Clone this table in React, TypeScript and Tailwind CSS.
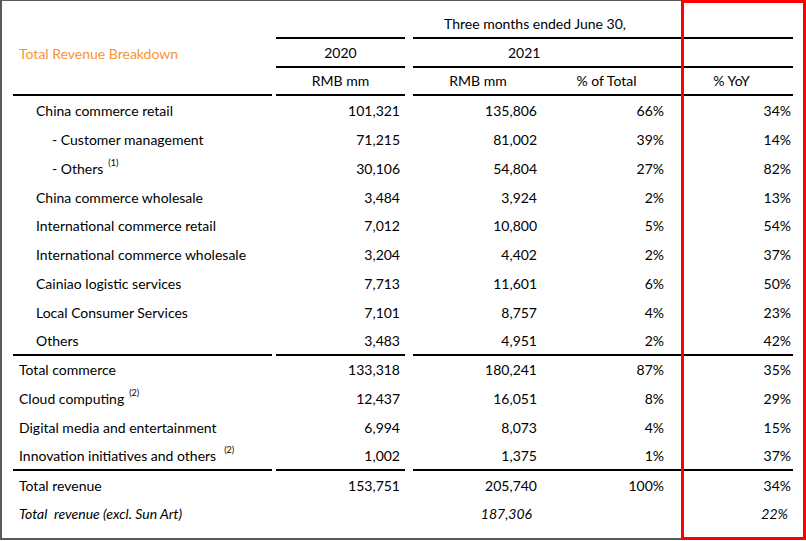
import React from "react";

type Row = {
  label: string;
  level: 0 | 1 | 2;
  sup?: string;
  supGap?: string;
  v2020: string;
  v2021: string;
  pct: string;
  yoy: string;
  border?: boolean;
  italic?: boolean;
};

const rows: Row[] = [
  { label: "China commerce retail", level: 1, v2020: "101,321", v2021: "135,806", pct: "66%", yoy: "34%" },
  { label: "- Customer management", level: 2, v2020: "71,215", v2021: "81,002", pct: "39%", yoy: "14%" },
  { label: "- Others", level: 2, sup: "(1)", supGap: "ml-[5px]", v2020: "30,106", v2021: "54,804", pct: "27%", yoy: "82%" },
  { label: "China commerce wholesale", level: 1, v2020: "3,484", v2021: "3,924", pct: "2%", yoy: "13%" },
  { label: "International commerce retail", level: 1, v2020: "7,012", v2021: "10,800", pct: "5%", yoy: "54%" },
  { label: "International commerce wholesale", level: 1, v2020: "3,204", v2021: "4,402", pct: "2%", yoy: "37%" },
  { label: "Cainiao logistic services", level: 1, v2020: "7,713", v2021: "11,601", pct: "6%", yoy: "50%" },
  { label: "Local Consumer Services", level: 1, v2020: "7,101", v2021: "8,757", pct: "4%", yoy: "23%" },
  { label: "Others", level: 1, v2020: "3,483", v2021: "4,951", pct: "2%", yoy: "42%", border: true },
  { label: "Total commerce", level: 0, v2020: "133,318", v2021: "180,241", pct: "87%", yoy: "35%" },
  { label: "Cloud computing", level: 0, sup: "(2)", supGap: "ml-[5px]", v2020: "12,437", v2021: "16,051", pct: "8%", yoy: "29%" },
  { label: "Digital media and entertainment", level: 0, v2020: "6,994", v2021: "8,073", pct: "4%", yoy: "15%" },
  { label: "Innovation initiatives and others", level: 0, sup: "(2)", supGap: "ml-[8px]", v2020: "1,002", v2021: "1,375", pct: "1%", yoy: "37%", border: true },
  { label: "Total revenue", level: 0, v2020: "153,751", v2021: "205,740", pct: "100%", yoy: "34%" },
  { label: "Total\u00a0 revenue (excl. Sun Art)", level: 0, v2020: "", v2021: "187,306", pct: "", yoy: "22%", italic: true },
];

const levelPad = ["pl-[6px]", "pl-[23px]", "pl-[39px]"];

export default function App() {
  const rowCls = "flex h-[28.8px] pl-[11px] items-stretch";
  const b = "border-b-2 border-black";
  return (
    <div
      className="relative w-[806px] h-[541px] bg-white text-[14px] text-black"
      style={{ fontFamily: "Lato, 'Liberation Sans', sans-serif" }}
    >
      <div className="w-[806px] h-[540px] border-l-2 border-t border-b-2 border-[#5a5a5a] pt-[9px]">
        {/* Header row 1 */}
        <div className={rowCls}>
          <div className="w-[259px]" />
          <div className={`w-[129px] ml-[4px] ${b}`} />
          <div className={`w-[380px] ml-[8px] ${b} flex items-center pl-[31px]`}>
            Three months ended June 30,
          </div>
        </div>
        {/* Header row 2 */}
        <div className={rowCls}>
          <div className="w-[259px] flex items-center pl-[6px] text-[#f79433]">Total Revenue Breakdown</div>
          <div className={`w-[129px] ml-[4px] ${b} flex items-center justify-center`}>2020</div>
          <div className={`w-[380px] ml-[8px] ${b} flex items-center pl-[95px]`}>2021</div>
        </div>
        {/* Header row 3 */}
        <div className={rowCls}>
          <div className={`w-[259px] ${b}`} />
          <div className={`w-[129px] ml-[4px] ${b} flex items-center justify-center`}>RMB mm</div>
          <div className={`ml-[8px] ${b} flex`}>
            <div className="w-[130px] flex items-center justify-center">RMB mm</div>
            <div className="w-[127px] flex items-center justify-center">% of Total</div>
            <div className="w-[123px] flex items-center justify-center">% YoY</div>
          </div>
        </div>
        {rows.map((r, i) => {
          const bb = r.border ? b : "";
          return (
            <div key={i} className={`${rowCls} ${r.italic ? "italic" : ""}`}>
              <div className={`w-[259px] ${bb} flex items-center ${levelPad[r.level]} whitespace-pre`}>
                <span>{r.label}</span>
                {r.sup && (
                  <span className={`${r.supGap} text-[9px] relative -top-[6px]`}>{r.sup}</span>
                )}
              </div>
              <div className={`w-[129px] ml-[4px] ${bb} flex items-center justify-end pr-[5px]`}>{r.v2020}</div>
              <div className={`ml-[8px] ${bb} flex`}>
                <div className={`w-[130px] flex items-center justify-end ${r.italic ? "pr-[11px]" : "pr-[6px]"}`}>{r.v2021}</div>
                <div className="w-[127px] flex items-center justify-end pr-[6px]">{r.pct}</div>
                <div className={`w-[123px] flex items-center justify-end ${r.italic ? "pr-[5px]" : "pr-[2px]"}`}>{r.yoy}</div>
              </div>
            </div>
          );
        })}
      </div>
      {/* Red annotation box */}
      <div className="absolute left-[681px] top-0 w-[125px] h-[540px] border-[3px] border-[#ff0000] pointer-events-none" />
    </div>
  );
}
